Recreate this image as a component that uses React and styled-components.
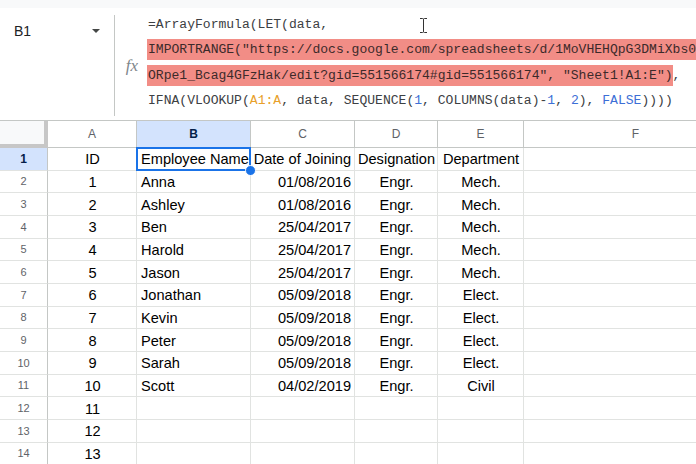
import React from "react";
import styled, { createGlobalStyle } from "styled-components";

// data
const COLUMNS = [
  { key: "A", width: 89, align: "center" },
  { key: "B", width: 114, align: "left" },
  { key: "C", width: 104, align: "right" },
  { key: "D", width: 83, align: "center" },
  { key: "E", width: 86, align: "center" },
  { key: "F", width: 224, align: "left" },
];

const ROWS = [
  ["ID", "Employee Name", "Date of Joining", "Designation", "Department"],
  ["1", "Anna", "01/08/2016", "Engr.", "Mech."],
  ["2", "Ashley", "01/08/2016", "Engr.", "Mech."],
  ["3", "Ben", "25/04/2017", "Engr.", "Mech."],
  ["4", "Harold", "25/04/2017", "Engr.", "Mech."],
  ["5", "Jason", "25/04/2017", "Engr.", "Mech."],
  ["6", "Jonathan", "05/09/2018", "Engr.", "Elect."],
  ["7", "Kevin", "05/09/2018", "Engr.", "Elect."],
  ["8", "Peter", "05/09/2018", "Engr.", "Elect."],
  ["9", "Sarah", "05/09/2018", "Engr.", "Elect."],
  ["10", "Scott", "04/02/2019", "Engr.", "Civil"],
  ["11"],
  ["12"],
  ["13"],
];

// style
const GlobalStyle = createGlobalStyle`
  html, body {
    margin: 0;
    background: #ffffff;
    overflow: hidden;
  }
  * {
    box-sizing: border-box;
  }
`;

const Page = styled.div`
  width: 696px;
  height: 464px;
  overflow: hidden;
  font-family: "Liberation Sans", Arial, sans-serif;
  color: #202124;
`;

const TopStrip = styled.div`
  height: 8px;
  background: #f8f9fa;
`;

const FormulaBar = styled.div`
  position: relative;
  display: flex;
  height: 112px;
  background: #ffffff;
`;

const NameBox = styled.div`
  width: 115px;
  display: flex;
  justify-content: space-between;
  align-items: flex-start;
  padding: 8px 14px 0 14px;
  margin: 7px 0 4px;
  border-right: 1px solid #c4c7c5;
  font-size: 14px;
`;

const Caret = styled.span`
  margin-top: 6px;
  width: 0;
  height: 0;
  border-left: 4px solid transparent;
  border-right: 4px solid transparent;
  border-top: 4px solid #444746;
`;

const FxSlot = styled.div`
  width: 32px;
  display: flex;
  align-items: center;
  justify-content: center;
  padding: 3px 0 0 2px;
  font-family: "Liberation Serif", serif;
  font-style: italic;
  font-size: 17px;
  color: #80868b;
`;

const FormulaText = styled.div`
  flex: 1;
  overflow: hidden;
  padding: 4px 0 0 1px;
  font-family: "Liberation Mono", "DejaVu Sans Mono", monospace;
  font-size: 13.05px;
  color: #3c4043;
`;

const Line = styled.div`
  height: 25.4px;
  line-height: 25.4px;
  white-space: pre;
`;

const Range = styled.span`
  background: #f28d86;
  color: #3c2a2a;
  padding: 3px 0 3px 2px;
  margin-left: -2px;
`;

const Tok = styled.span`
  color: ${({ kind }) => (kind === "ref" ? "#e8a02a" : "#3c6fd6")};
`;

const Cursor = styled.svg`
  position: absolute;
  left: 419px;
  top: 9px;
`;

const Sheet = styled.div`
  display: grid;
  grid-template-columns: 48px ${COLUMNS.map((c) => c.width + "px").join(" ")};
  grid-template-rows: 27px repeat(14, 22.67px);
  border-top: 1px solid #c4c7c5;
`;

const Corner = styled.div`
  background: #f8f9fa;
  border-right: 4px solid #c7c7c7;
  border-bottom: 4px solid #c7c7c7;
`;

const ColHeader = styled.div`
  display: flex;
  align-items: center;
  justify-content: center;
  font-size: 12px;
  color: ${({ $selected }) => ($selected ? "#041e49" : "#5f6368")};
  font-weight: ${({ $selected }) => ($selected ? 700 : 400)};
  background: ${({ $selected }) => ($selected ? "#d3e3fd" : "#ffffff")};
  border-right: 1px solid #c4c7c5;
  border-bottom: 1px solid #c4c7c5;
`;

const RowHeader = styled.div`
  display: flex;
  align-items: center;
  justify-content: center;
  font-size: ${({ $selected }) => ($selected ? "12px" : "11px")};
  color: ${({ $selected }) => ($selected ? "#041e49" : "#5f6368")};
  font-weight: ${({ $selected }) => ($selected ? 700 : 400)};
  background: ${({ $selected }) => ($selected ? "#d3e3fd" : "#ffffff")};
  border-right: 1px solid #c4c7c5;
  border-bottom: 1px solid #e1e3e1;
`;

const Cell = styled.div`
  position: relative;
  display: flex;
  align-items: center;
  justify-content: ${({ $align }) =>
    $align === "center" ? "center" : $align === "right" ? "flex-end" : "flex-start"};
  padding: 1px 3px 0 4px;
  font-size: 14.6px;
  color: #000000;
  white-space: nowrap;
  border-right: 1px solid #e1e3e1;
  border-bottom: 1px solid #e1e3e1;
  ${({ $active }) =>
    $active &&
    `
    &::after {
      content: "";
      position: absolute;
      inset: -1px -1px -1px -1px;
      border: 2px solid #1a73e8;
      pointer-events: none;
    }
  `}
`;

const Handle = styled.span`
  position: absolute;
  right: -6px;
  bottom: -6px;
  width: 11px;
  height: 11px;
  border-radius: 50%;
  background: #1a73e8;
  border: 1px solid #ffffff;
  z-index: 2;
`;

const App = () => {
  return (
    <Page>
      <GlobalStyle />
      <TopStrip />

      <FormulaBar>
        <NameBox>
          <span>B1</span>
          <Caret />
        </NameBox>
        <FxSlot>fx</FxSlot>
        <FormulaText>
          <Line>=ArrayFormula(LET(data,</Line>
          <Line>
            <Range>
              IMPORTRANGE("https://docs.google.com/spreadsheets/d/1MoVHEHQpG3DMiXbs0
            </Range>
          </Line>
          <Line>
            <Range>
              ORpe1_Bcag4GFzHak/edit?gid=551566174#gid=551566174", "Sheet1!A1:E")
            </Range>
            ,
          </Line>
          <Line>
            IFNA(VLOOKUP(<Tok kind="ref">A1:A</Tok>, data, SEQUENCE(
            <Tok>1</Tok>, COLUMNS(data)-<Tok>1</Tok>, <Tok>2</Tok>),{" "}
            <Tok>FALSE</Tok>))))
          </Line>
        </FormulaText>
        <Cursor width="9" height="17" viewBox="0 0 9 17">
          <path
            d="M1 1.5h2.5c.6 0 1 .4 1 1v12c0 .6.4 1 1 1H8M8 1.5H5.5c-.6 0-1 .4-1 1v12c0 .6-.4 1-1 1H1"
            fill="none"
            stroke="#333"
            strokeWidth="1"
          />
        </Cursor>
      </FormulaBar>

      <Sheet>
        <Corner />
        {COLUMNS.map((c) => (
          <ColHeader key={c.key} $selected={c.key === "B"}>
            {c.key}
          </ColHeader>
        ))}
        {ROWS.map((row, r) => (
          <React.Fragment key={r}>
            <RowHeader $selected={r === 0}>{r + 1}</RowHeader>
            {COLUMNS.map((c, i) => {
              const active = r === 0 && c.key === "B";
              return (
                <Cell key={c.key} $align={c.align} $active={active}>
                  {row[i] || ""}
                  {active && <Handle />}
                </Cell>
              );
            })}
          </React.Fragment>
        ))}
      </Sheet>
    </Page>
  );
};

export default App;
